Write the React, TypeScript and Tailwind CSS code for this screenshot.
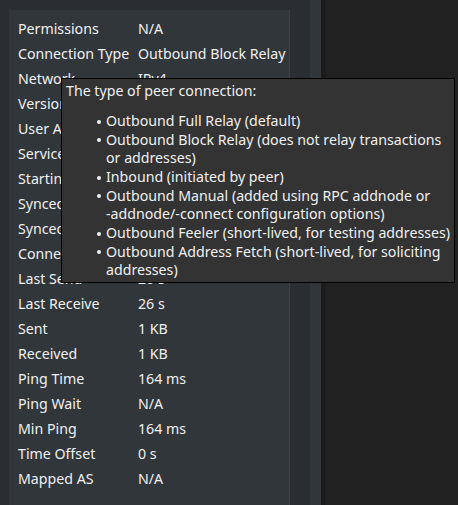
const rows: [string, string][] = [
  ["Permissions", "N/A"],
  ["Connection Type", "Outbound Block Relay"],
  ["Network", "IPv4"],
  ["Version", "70016"],
  ["User Agent", "/Satoshi:22.0.0/"],
  ["Services", "Network & Witness"],
  ["Starting Block", "708211"],
  ["Synced Headers", "708211"],
  ["Synced Blocks", "708211"],
  ["Connection Time", "26 s"],
  ["Last Send", "26 s"],
  ["Last Receive", "26 s"],
  ["Sent", "1 KB"],
  ["Received", "1 KB"],
  ["Ping Time", "164 ms"],
  ["Ping Wait", "N/A"],
  ["Min Ping", "164 ms"],
  ["Time Offset", "0 s"],
  ["Mapped AS", "N/A"],
];

const tips: string[][] = [
  ["Outbound Full Relay (default)"],
  ["Outbound Block Relay (does not relay transactions", "or addresses)"],
  ["Inbound (initiated by peer)"],
  ["Outbound Manual (added using RPC addnode or", "-addnode/-connect configuration options)"],
  ["Outbound Feeler (short-lived, for testing addresses)"],
  ["Outbound Address Fetch (short-lived, for soliciting", "addresses)"],
];

export default function App() {
  return (
    <div className="relative flex h-[505px] w-[458px] overflow-hidden bg-[#2a2e32] font-['Noto_Sans',sans-serif] text-[14.2px] text-[#eff0f1]">
      <div className="pl-[9px] pt-[10px]">
        <div className="h-[520px] w-[281px] border-r border-[#3d4247] bg-[#31363b] pl-[9px] pt-[6px]">
          {rows.map(([label, value]) => (
            <div key={label} className="flex h-[25px] items-center whitespace-nowrap">
              <span className="w-[120px]">{label}</span>
              <span>{value}</span>
            </div>
          ))}
        </div>
      </div>
      <div className="ml-[20px] w-[11px] bg-[#31363b]" />
      <div className="w-[5px] bg-[#1b1b1b]" />
      <div className="flex-1 bg-[#212121]" />

      <div className="absolute left-[61px] top-[78px] h-[205px] w-[394px] border border-black bg-[#333333] px-[4px] pt-[3px] leading-[18.67px]">
        <p>The type of peer connection:</p>
        <ul className="mt-[11.33px] flex flex-col">
          {tips.map((lines) => (
            <li key={lines[0]} className="flex whitespace-nowrap">
              <span className="ml-[31px] mr-[5px] mt-[7.5px] h-[4px] w-[4px] shrink-0 rounded-full bg-[#eff0f1]" />
              <span>
                {lines.map((l, i) => (
                  <span key={i} className="block">
                    {l}
                  </span>
                ))}
              </span>
            </li>
          ))}
        </ul>
      </div>
    </div>
  );
}
